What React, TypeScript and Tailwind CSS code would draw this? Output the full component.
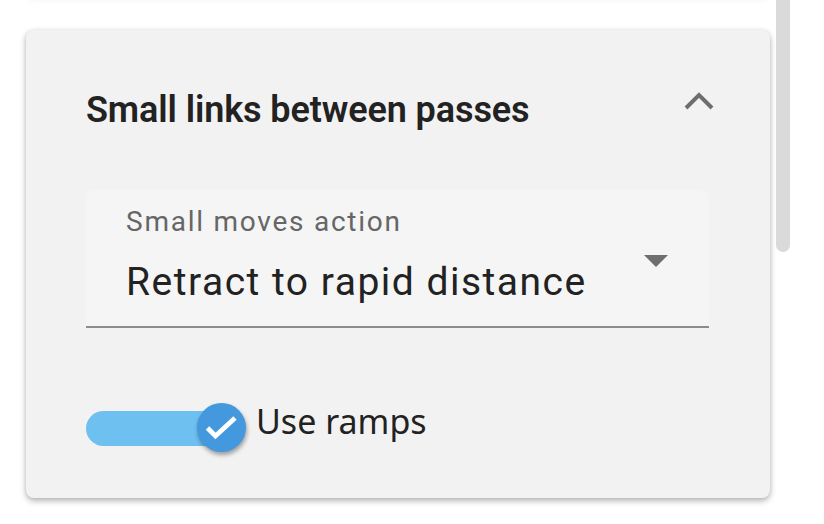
import React from "react";

export default function App() {
  return (
    <div className="relative w-[824px] h-[524px] bg-white overflow-hidden" style={{ fontFamily: "Roboto, 'Noto Sans', sans-serif" }}>
      {/* previous card shadow at top */}
      <div className="absolute left-[26px] top-[-44px] w-[744px] h-[40px] bg-white rounded-[8px] shadow-[0_2px_8px_rgba(0,0,0,0.08)]" />
      {/* scrollbar */}
      <div className="absolute left-[776px] top-0 w-[14px] h-[252px] bg-[#dadada] rounded-b-[7px]" />

      <div className="ml-[26px] pt-[30px]">
        <div className="w-[744px] h-[468px] bg-[#f2f2f2] rounded-[8px] shadow-[0_3px_6px_rgba(0,0,0,0.28),0_0_4px_rgba(0,0,0,0.08)] flex flex-col">
          <div className="flex items-start justify-between pl-[60px] pr-[56px] pt-[58px]">
            <div className="text-[36px] leading-[44px] font-semibold text-[#222] tracking-[-0.1px]">Small links between passes</div>
            <svg width="30" height="20" viewBox="0 0 30 20" className="mt-[3px]">
              <path d="M2 17 L15 4 L28 17" fill="none" stroke="#6e6e6e" strokeWidth="4" />
            </svg>
          </div>

          <div className="ml-[60px] mt-[58px] w-[623px] h-[138px] bg-[#f5f5f5] rounded-t-[8px] border-b-2 border-[#8c8c8c] flex items-start justify-between pl-[40px] pr-[41px]">
            <div className="flex flex-col">
              <div className="mt-[16px] text-[28px] leading-[32px] text-[#666] tracking-[1.75px]">Small moves action</div>
              <div className="mt-[21px] text-[39px] leading-[46px] text-[#222] tracking-[1.5px]">Retract to rapid distance</div>
            </div>
            <svg width="24" height="12" viewBox="0 0 24 12" className="mt-[65px]">
              <path d="M0 0 L24 0 L12 12 Z" fill="#6e6e6e" />
            </svg>
          </div>

          <div className="ml-[60px] mt-[75px] flex items-center">
            <div className="relative w-[160px] h-[50px] flex items-center">
              <div className="w-[152px] h-[35px] rounded-full bg-[#6ec0f0]" />
              <div className="absolute left-[111px] top-0 w-[49px] h-[49px] rounded-full bg-[#4499de] shadow-[1px_3px_4px_rgba(0,0,0,0.35)] flex items-center justify-center">
                <svg width="34" height="26" viewBox="0 0 34 26">
                  <path d="M2.5 13 L10.5 21 L30 3" fill="none" stroke="#fff" strokeWidth="4.8" />
                </svg>
              </div>
            </div>
            <div className="ml-[10px] text-[34px] leading-[40px] text-[#222] mt-[-14px]" style={{ fontFamily: "'Noto Sans', 'Open Sans', sans-serif" }}>Use ramps</div>
          </div>
        </div>
      </div>
    </div>
  );
}
